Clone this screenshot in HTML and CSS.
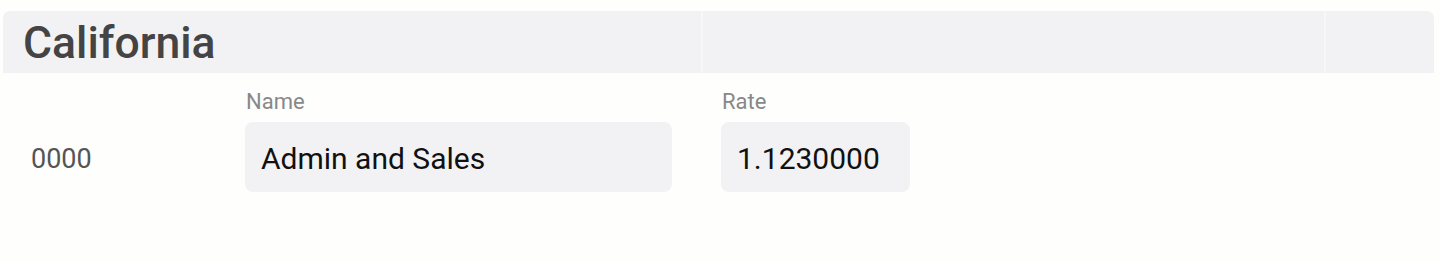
FILE: index.html
```html
<!DOCTYPE html>
<html lang="en">
<head>
  <meta charset="UTF-8">
  <meta name="viewport" content="width=device-width, initial-scale=1.0">
  <title>Tax rates</title>
  <link rel="stylesheet" href="styles.css">
</head>
<body>
<div class="group">
  <!-- Cabecera del grupo -->
  <div class="group-header">
    <div class="cell cell-title">California</div>
    <div class="cell cell-mid"></div>
    <div class="cell cell-end"></div>
  </div>

  <div class="rate-row">
    <div class="code">0000</div>
    <div class="field field-name">
      <label class="field-label">Name</label>
      <div class="field-box">Admin and Sales</div>
    </div>
    <div class="field field-rate">
      <label class="field-label">Rate</label>
      <div class="field-box">1.1230000</div>
    </div>
  </div>
</div>
</body>
</html>
```

FILE: styles.css
```css
* {
  box-sizing: border-box;
  margin: 0;
  padding: 0;
}

body {
  font-family: Roboto, "Noto Sans", sans-serif;
  background-color: #fefefd;
  color: #333;
  padding: 11px 6px 0 3px;
}

.group-header {
  display: flex;
  height: 62px;
  background-color: #f2f2f4;
  border-radius: 7px 7px 0 0;
  overflow: hidden;
}

.cell {
  display: flex;
  align-items: center;
}

.cell-title {
  width: 698px;
  padding: 2px 0 0 20px;
  font-size: 44.5px;
  font-weight: 500;
  color: #444;
}

.cell-mid {
  flex: 1;
  border-left: 2px solid #f7f7f6;
}

.cell-end {
  width: 110px;
  border-left: 2px solid #f7f7f6;
}

.rate-row {
  display: flex;
  align-items: flex-end;
  padding: 15px 0 0 28px;
}

.code {
  width: 214px;
  height: 70px;
  display: flex;
  align-items: center;
  padding-top: 3px;
  font-size: 27px;
  color: #555;
}

.field {
  display: flex;
  flex-direction: column;
}

.field-label {
  font-size: 22px;
  line-height: 28px;
  color: #888;
  margin-bottom: 6px;
  padding-left: 1px;
}

.field-box {
  height: 70px;
  display: flex;
  align-items: center;
  padding: 2px 0 0 16px;
  background-color: #f2f2f4;
  border-radius: 8px;
  font-size: 30px;
  color: #111;
}

.field-name {
  width: 427px;
  margin-right: 49px;
}

.field-rate {
  width: 189px;
}
```
